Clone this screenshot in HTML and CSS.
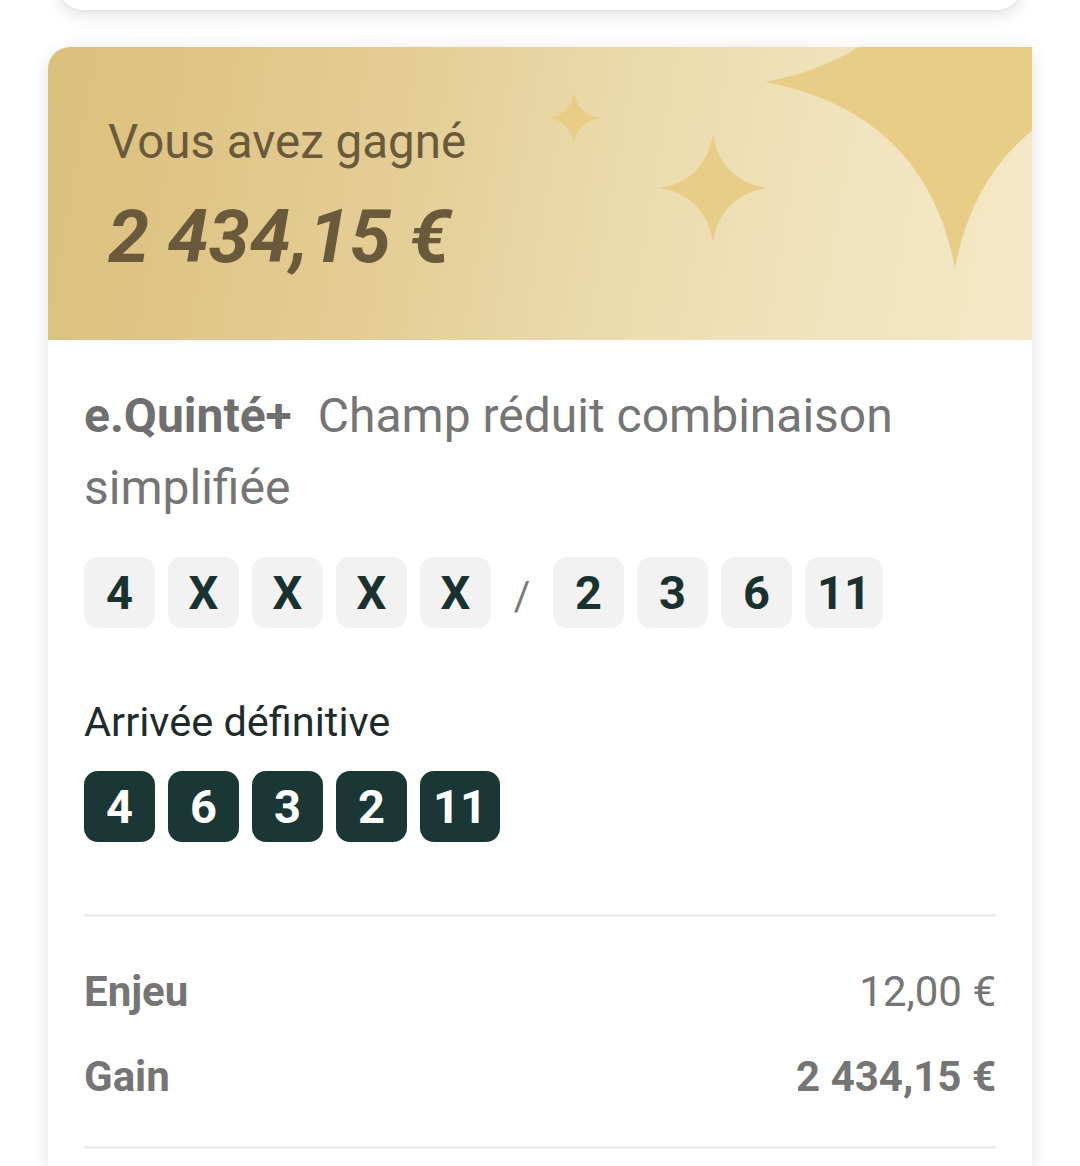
FILE: index.html
```html
<!DOCTYPE html>
<html lang="fr">
<head>
<meta charset="utf-8">
<link rel="stylesheet" href="styles.css">
</head>
<body>
<div class="prev-card"></div>
<section class="card">
  <header class="win">
    <svg class="sparkles" viewBox="0 0 984 293" preserveAspectRatio="none" aria-hidden="true">
      <path d="M717 35 Q877 5 907 -153 Q937 5 1097 35 Q937 65 907 221 Q877 65 717 35 Z"/>
      <path d="M612 141 Q657 133 665 88 Q673 133 718 141 Q673 149 665 194 Q657 149 612 141 Z"/>
      <path d="M501 71 Q522 67 526 46 Q530 67 551 71 Q530 75 526 96 Q522 75 501 71 Z"/>
    </svg>
    <p class="win-label">Vous avez gagné</p>
    <p class="win-amount">2 434,15 €</p>
  </header>
  <div class="body">
    <p class="bet-title"><b class="bet-type">e.Quinté+</b><span class="bet-desc">Champ réduit combinaison simplifiée</span></p>
    <div class="chips">
      <span class="chip">4</span>
      <span class="chip">X</span>
      <span class="chip">X</span>
      <span class="chip">X</span>
      <span class="chip">X</span>
      <span class="sep">/</span>
      <span class="chip">2</span>
      <span class="chip">3</span>
      <span class="chip">6</span>
      <span class="chip">11</span>
    </div>
    <p class="arrival-label">Arrivée définitive</p>
    <div class="chips">
      <span class="chip dark">4</span>
      <span class="chip dark">6</span>
      <span class="chip dark">3</span>
      <span class="chip dark">2</span>
      <span class="chip dark">11</span>
    </div>
    <div class="summary">
      <div class="row"><span class="key">Enjeu</span><span class="val">12,00 €</span></div>
      <div class="row"><span class="key">Gain</span><span class="val strong">2 434,15 €</span></div>
    </div>
  </div>
</section>
</body>
</html>
```
FILE: styles.css
```css
* { box-sizing: border-box; }
html, body { margin: 0; padding: 0; background: #ffffff; }
body {
  font-family: Roboto, "Noto Sans", "Liberation Sans", sans-serif;
  height: 1166px;
  overflow: hidden;
}
p { margin: 0; }

.prev-card {
  height: 50px;
  margin: -40px 58px 0;
  background: #fff;
  border-radius: 32px;
  box-shadow: 0 6px 16px rgba(0, 0, 0, 0.10), 0 1px 3px rgba(0, 0, 0, 0.06);
}

.card {
  margin: 37px 48px 0;
  background: #fff;
  border-radius: 22px 0 0 0;
  box-shadow: 0 4px 18px rgba(0, 0, 0, 0.12);
  overflow: hidden;
}

.win {
  position: relative;
  height: 293px;
  padding: 67px 0 0 60px;
  background: linear-gradient(100deg, #dbbf7b 0%, #e4cd95 35%, #ecdcad 60%, #f1e3bd 80%, #f4e8c7 100%);
  color: #6a5a3b;
  overflow: hidden;
}
.sparkles {
  position: absolute;
  left: 0;
  top: 0;
  width: 984px;
  height: 293px;
  fill: #e8cd86;
}
.win-label {
  position: relative;
  font-size: 47.5px;
  line-height: 56px;
}
.win-amount {
  position: relative;
  margin-top: 23px;
  font-size: 74px;
  line-height: 88px;
  font-weight: 700;
  font-style: italic;
}

.body {
  padding: 40px 36px 18px;
}
.bet-title {
  font-size: 48px;
  line-height: 72px;
  color: #757575;
}
.bet-type { font-weight: 700; color: #6f6f6f; margin-right: 26px; }

.chips {
  display: flex;
  align-items: center;
  gap: 13px;
  margin-top: 33px;
}
.chip {
  min-width: 71px;
  height: 71px;
  padding: 0 12px;
  border-radius: 14px;
  background: #f2f2f2;
  color: #193230;
  font-size: 47px;
  font-weight: 700;
  display: flex;
  align-items: center;
  justify-content: center;
}
.chip.dark {
  background: #1b3735;
  color: #ffffff;
  padding: 0 13px;
}
.sep {
  width: 36px;
  text-align: center;
  color: #7a7a7a;
  font-size: 40px;
  font-weight: 400;
  margin: 8px 0 0;
}

.arrival-label {
  margin-top: 69px;
  font-size: 41.5px;
  line-height: 50px;
  color: #1e2b2b;
}
.arrival-label + .chips { margin-top: 24px; }

.summary {
  margin-top: 72px;
  border-top: 3px solid #eeeeee;
  border-bottom: 3px solid #eeeeee;
  padding: 50px 0 44px;
  display: flex;
  flex-direction: column;
  gap: 35px;
}
.row {
  display: flex;
  justify-content: space-between;
  font-size: 42px;
  line-height: 50px;
  color: #757575;
}
.key { font-weight: 700; }
.val.strong { font-weight: 700; }
```
